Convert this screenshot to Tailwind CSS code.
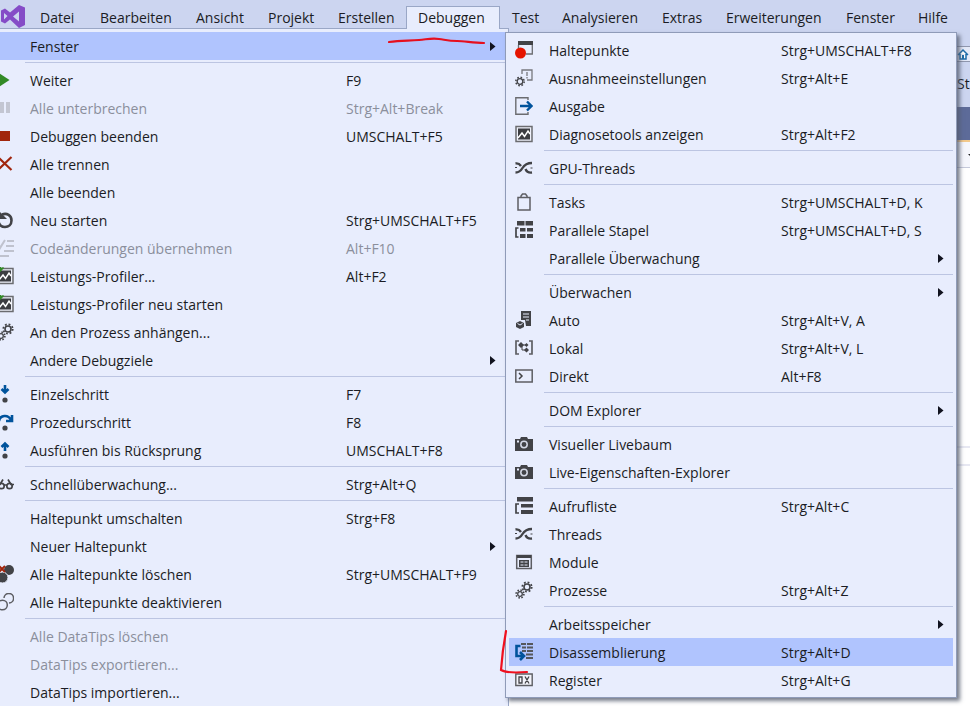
<!DOCTYPE html>
<html lang="de">
<head>
<meta charset="utf-8">
<meta name="viewport" content="width=device-width, initial-scale=1">
<title>Visual Studio – Debuggen</title>
<script src="https://cdn.jsdelivr.net/npm/@tailwindcss/browser@4"></script>
</head>
<body class="relative flex h-screen flex-col overflow-hidden bg-[#ccd5f0] font-['Open_Sans','Noto_Sans',sans-serif] text-sm text-[#1b1c24]">
<svg class="hidden" aria-hidden="true">
  <symbol id="chart" viewBox="0 0 18 18"><path d="M1 1.500h16v15H1z" fill="#eef0fa" stroke="#6b6c70" stroke-width="1.500"/><path d="M3 3.500h12v11H3z" fill="#3c3d41"/><path d="M3 13l4-5 2.500 3.500L13 6l2 3" fill="none" stroke="#fff" stroke-width="1.500"/></symbol>
  <symbol id="gears" viewBox="0 0 18 18"><g fill="none" stroke="#424347"><circle cx="12" cy="6" r="3" stroke-width="1.600"/><circle cx="12" cy="6" r="4.700" stroke-width="1.800" stroke-dasharray="1.850 1.840"/><circle cx="5" cy="13" r="2.300" stroke-width="1.300"/><circle cx="5" cy="13" r="3.900" stroke-width="1.600" stroke-dasharray="1.530 1.530"/></g></symbol>
  <symbol id="threads" viewBox="0 0 18 18"><g fill="none" stroke="#424347" stroke-width="2.400"><path d="M.5 13.500c4 0 5.500-2 7-4.500S12 4 17 4"/><path d="M.5 4.500c2.500-.5 4 .3 5.500 2.500M10.500 10c1 2.500 3 4 6.500 3.500"/><path d="M0 8.500h2M15.500 9h2" stroke-width="1.200"/></g></symbol>
  <symbol id="camera" viewBox="0 0 18 18"><path d="M0 4h5l1-2h6l1 2h5v12H0z" fill="#424347"/><circle cx="9" cy="9.500" r="3.200" fill="none" stroke="#d5d9e6" stroke-width="1.500"/><path d="M2 5.500h2v2H2z" fill="#e8edfd"/></symbol>
  <symbol id="arrow" viewBox="0 0 6 9"><path d="M0 0l5.500 4.500L0 9z" fill="#11131f"/></symbol>
</svg>

<nav aria-label="Hauptmenü" class="flex h-7 shrink-0 items-end whitespace-nowrap [&_button]:h-[22px] [&_button]:shrink-0 [&_button]:pt-0.5 [&_button]:pl-3 [&_button]:text-left">
  <svg class="h-7 w-7 shrink-0" viewBox="0 0 28 28" aria-hidden="true"><path d="M19 5l6 2.500v17.500L19 28l-9-8.500-5 4-4-2v-11L5 8.500l5 4zM19 11.500l-6 5 6 5zM4 13v6.500L7.500 16z" fill="#854cc7" fill-rule="evenodd"/></svg>
  <button class="w-[60px]">Datei</button>
  <button class="w-24">Bearbeiten</button>
  <button class="w-[72px]">Ansicht</button>
  <button class="w-[70px]">Projekt</button>
  <button class="w-20">Erstellen</button>
  <button class="w-[94px] bg-[#e8edfd] inset-ring inset-ring-[#9aa7c6] relative z-10 after:absolute after:inset-x-px after:-bottom-px after:h-0.5 after:bg-[#e8edfd]" aria-expanded="true">Debuggen</button>
  <button class="w-[50px]">Test</button>
  <button class="w-[100px]">Analysieren</button>
  <button class="w-16">Extras</button>
  <button class="w-[120px]">Erweiterungen</button>
  <button class="w-[72px]">Fenster</button>
  <button class="w-16">Hilfe</button>
</nav>

<div class="flex min-h-0 flex-1">
  <div role="menu" aria-label="Debuggen" class="w-[509px] shrink-0 overflow-hidden border-t border-r border-[#9aa7c6] bg-[#e8edfd] pt-[3px] whitespace-nowrap [&_button]:grid [&_button]:h-7 [&_button]:w-full [&_button]:grid-cols-[30px_316px_144px_1fr] [&_button]:items-center [&_button]:text-left [&_hr]:mt-0.5 [&_hr]:mb-[3px] [&_hr]:ml-[25px] [&_hr]:border-[#bcc5e2] [&_span]:pt-0.5 [&_svg]:-ml-1 [&_svg]:size-[18px] [&_svg.arrow]:ml-0 [&_svg.arrow]:h-[9px] [&_svg.arrow]:w-1.5">
    <button role="menuitem" class="bg-[#b0c4fe]"><i></i><span>Fenster</span><span></span><svg class="arrow"><use href="#arrow"/></svg></button>
    <hr>
    <button role="menuitem"><svg viewBox="0 0 18 18"><path d="M2 1.500L13.500 9 2 16.500z" fill="#328a26"/></svg><span>Weiter</span><span>F9</span></button>
    <button role="menuitem" disabled class="text-[#8b8f9c]"><svg viewBox="0 0 18 18"><path d="M3 3h5v11H3zM10 3h4v11h-4z" fill="#c3c6d2"/></svg><span>Alle unterbrechen</span><span>Strg+Alt+Break</span></button>
    <button role="menuitem"><svg viewBox="0 0 18 18"><path d="M2 4h12v10H2z" fill="#a1260d"/></svg><span>Debuggen beenden</span><span>UMSCHALT+F5</span></button>
    <button role="menuitem"><svg viewBox="0 0 18 18"><path d="M2 2l13.500 13M15.500 2L2 15" stroke="#a1260d" stroke-width="2.200"/></svg><span>Alle trennen</span><span></span></button>
    <button role="menuitem"><i></i><span>Alle beenden</span><span></span></button>
    <button role="menuitem"><svg viewBox="0 0 18 18"><path d="M6 3.500c5-2 9.500 1 9.500 6 0 4-3 6.500-6.500 6.500-3 0-5-1.500-6-4" fill="none" stroke="#424347" stroke-width="2.600"/><path d="M3 0v8h8z" fill="#424347"/></svg><span>Neu starten</span><span>Strg+UMSCHALT+F5</span></button>
    <button role="menuitem" disabled class="text-[#8b8f9c]"><svg viewBox="0 0 18 18"><path d="M2 4l2 5 5-8M11 2h7M10 7h8M8 12h10M1 17h12" fill="none" stroke="#bfc2ce" stroke-width="2"/></svg><span>Codeänderungen übernehmen</span><span>Alt+F10</span></button>
    <button role="menuitem"><svg viewBox="0 0 18 18"><use href="#chart"/><path d="M1 3.500l3.500-3v3l3-3" stroke="#328a26" stroke-width="1.600" fill="none"/></svg><span>Leistungs-Profiler...</span><span>Alt+F2</span></button>
    <button role="menuitem"><svg viewBox="0 0 18 18"><use href="#chart"/><path d="M1 3.500l3.500-3v3l3-3" stroke="#328a26" stroke-width="1.600" fill="none"/></svg><span>Leistungs-Profiler neu starten</span><span></span></button>
    <button role="menuitem"><svg><use href="#gears"/></svg><span>An den Prozess anhängen...</span><span></span></button>
    <button role="menuitem"><i></i><span>Andere Debugziele</span><span></span><svg class="arrow"><use href="#arrow"/></svg></button>
    <hr>
    <button role="menuitem"><svg viewBox="0 0 18 18"><path d="M9 0v8M5.500 4L9 7.500 12.500 4" fill="none" stroke="#00539c" stroke-width="2.600"/><circle cx="9" cy="15" r="2.600" fill="#424347"/></svg><span>Einzelschritt</span><span>F7</span></button>
    <button role="menuitem"><svg viewBox="0 0 18 18"><path d="M3 8c1-6 9-7 12-1M16 2v6h-6" fill="none" stroke="#00539c" stroke-width="2.600"/><circle cx="9" cy="15" r="2.600" fill="#424347"/></svg><span>Prozedurschritt</span><span>F8</span></button>
    <button role="menuitem"><svg viewBox="0 0 18 18"><path d="M9 10V2M5.500 6L9 2.500 12.500 6" fill="none" stroke="#00539c" stroke-width="2.600"/><circle cx="9" cy="15" r="2.600" fill="#424347"/></svg><span>Ausführen bis Rücksprung</span><span>UMSCHALT+F8</span></button>
    <hr>
    <button role="menuitem"><svg viewBox="0 0 18 18"><g fill="none" stroke="#424347" stroke-width="1.700"><circle cx="5.500" cy="11" r="2.700"/><circle cx="13.500" cy="11" r="2.700"/><path d="M1 9.500h3l3-5M18 9.500h-3l-3-5M8 10h3"/></g></svg><span>Schnellüberwachung...</span><span>Strg+Alt+Q</span></button>
    <hr>
    <button role="menuitem"><i></i><span>Haltepunkt umschalten</span><span>Strg+F8</span></button>
    <button role="menuitem"><i></i><span>Neuer Haltepunkt</span><span></span><svg class="arrow"><use href="#arrow"/></svg></button>
    <button role="menuitem"><svg viewBox="0 0 18 18"><circle cx="13" cy="5" r="5" fill="#424347"/><circle cx="6.500" cy="12.500" r="5.500" fill="#424347" stroke="#e8edfd"/><path d="M3 1l6 6M9 1L3 7" stroke="#a1260d" stroke-width="2"/></svg><span>Alle Haltepunkte löschen</span><span>Strg+UMSCHALT+F9</span></button>
    <button role="menuitem"><svg viewBox="0 0 18 18"><g fill="none" stroke="#5d5e63" stroke-width="1.500"><path d="M8 5a4.800 4.800 0 1 1 5 5"/><circle cx="6.500" cy="12" r="4.800"/></g></svg><span>Alle Haltepunkte deaktivieren</span><span></span></button>
    <hr>
    <button role="menuitem" disabled class="text-[#8b8f9c]"><i></i><span>Alle DataTips löschen</span><span></span></button>
    <button role="menuitem" disabled class="text-[#8b8f9c]"><i></i><span>DataTips exportieren...</span><span></span></button>
    <button role="menuitem"><i></i><span>DataTips importieren...</span><span></span></button>
  </div>

  <div class="flex min-w-0 flex-1 flex-col bg-white">
    <div class="flex h-[79px] shrink-0 flex-col items-end gap-3 bg-[#ccd5f0] pt-[18px]">
      <div class="flex h-4 w-3.5 items-center border-y border-[#8f96ad] bg-[#e4e9f8]"><svg class="size-3.5" viewBox="0 0 14 14" aria-hidden="true"><path d="M2 8l5-5 5 5M4 7v5h6V7" fill="#fff" stroke="#1c6ba8" stroke-width="1.500"/><path d="M6 8h2v4H6z" fill="#1c6ba8"/></svg></div>
      <span class="w-[13px] overflow-hidden">St</span>
    </div>
    <div class="h-[33px] shrink-0 bg-[#5d6b99]"></div>
    <div class="flex h-7 shrink-0 items-center justify-end border-t-2 border-b border-t-[#f3c98b] border-b-[#c5c9da] bg-[#f5f6fc]"><svg class="h-0.5 w-0.5" viewBox="0 0 2 2" aria-hidden="true"><path d="M0 0h2v2z" fill="#222"/></svg></div>
    <div class="mt-[278px] h-5 shrink-0 border-y-2 border-[#e7e8f2]"></div>
  </div>
</div>

<div role="menu" aria-label="Fenster" class="absolute top-8 left-[505px] z-20 w-[452px] border border-[#8f9bb8] bg-[#e8edfd] p-[3px] whitespace-nowrap shadow-[3px_3px_4px_#555d6ecc] [&_button]:grid [&_button]:h-7 [&_button]:w-full [&_button]:grid-cols-[40px_232px_157px_1fr] [&_button]:items-center [&_button]:text-left [&_hr]:mt-0.5 [&_hr]:mb-[3px] [&_hr]:ml-[35px] [&_hr]:border-[#bcc5e2] [&_span]:pt-0.5 [&_svg]:ml-1.5 [&_svg]:size-[18px] [&_svg.arrow]:ml-0 [&_svg.arrow]:h-[9px] [&_svg.arrow]:w-1.5">
  <button role="menuitem"><svg viewBox="0 0 18 18"><path d="M3 0h15v4H3z" fill="#424347"/><path d="M3.500 4v4M17.300 4v9H11" fill="none" stroke="#6b6c70" stroke-width="1.300"/><circle cx="5.500" cy="12" r="5.500" fill="#e51400"/></svg><span>Haltepunkte</span><span>Strg+UMSCHALT+F8</span></button>
  <button role="menuitem"><svg viewBox="0 0 18 18"><path d="M7 5V1h10v10h-5M12 3v4M12 8v1.500" fill="none" stroke="#77787e" stroke-width="1.300"/><circle cx="5" cy="12.500" r="2.800" fill="none" stroke="#424347" stroke-width="1.300"/><circle cx="5" cy="12.500" r="4.200" fill="none" stroke="#424347" stroke-width="1.500" stroke-dasharray="1.650 1.650"/></svg><span>Ausnahmeeinstellungen</span><span>Strg+Alt+E</span></button>
  <button role="menuitem"><svg viewBox="0 0 18 18"><path d="M13 3V.8H.8v16.400H13V15" fill="none" stroke="#6b6c70" stroke-width="1.400"/><path d="M5 9h11M12 4.500L16.500 9 12 13.500" fill="none" stroke="#00539c" stroke-width="2.400"/></svg><span>Ausgabe</span><span></span></button>
  <button role="menuitem"><svg><use href="#chart"/></svg><span>Diagnosetools anzeigen</span><span>Strg+Alt+F2</span></button>
  <hr>
  <button role="menuitem"><svg><use href="#threads"/></svg><span>GPU-Threads</span><span></span></button>
  <hr>
  <button role="menuitem"><svg viewBox="0 0 18 18"><path d="M3 4.500h12v12.500H3zM6 4.500V3l1.500-2h3L12 3v1.500" fill="none" stroke="#5d5e63" stroke-width="1.500"/></svg><span>Tasks</span><span>Strg+UMSCHALT+D, K</span></button>
  <button role="menuitem"><svg viewBox="0 0 18 18"><path d="M2 0h7.500v4.500H2zM10.500 0H18v4.500h-7.500zM5 7h5.500v3.500H5zM12 7h6v3.500h-6zM5 13h5.500v4H5zM12 13h6v4h-6z" fill="#424347"/><path d="M3.500 7H1v9h2.500" fill="none" stroke="#424347" stroke-width="1.700"/></svg><span>Parallele Stapel</span><span>Strg+UMSCHALT+D, S</span></button>
  <button role="menuitem"><i></i><span>Parallele Überwachung</span><span></span><svg class="arrow"><use href="#arrow"/></svg></button>
  <hr>
  <button role="menuitem"><i></i><span>Überwachen</span><span></span><svg class="arrow"><use href="#arrow"/></svg></button>
  <button role="menuitem"><svg viewBox="0 0 18 18"><path d="M6 0h10v15h-5l-1-6H6z" fill="#424347"/><path d="M8 3h6M8 6h6M11 9h3" stroke="#e8edfd" stroke-width="1.200"/><path d="M1 12l4-2 4 2v4l-4 2-4-2z" fill="#424347"/><path d="M2.500 12.500L5 14l2.500-1.500" fill="none" stroke="#e8edfd"/></svg><span>Auto</span><span>Strg+Alt+V, A</span></button>
  <button role="menuitem"><svg viewBox="0 0 18 18"><path d="M4 2H1v13h3M14 2h3v13h-3" fill="none" stroke="#5d5e63" stroke-width="1.700"/><path d="M3 6l3-3 3 3-3 3zM9.500 6l2-2 2 2-2 2zM9 11l2.500-2.500L14 11l-2.500 2.500z" fill="#424347"/><path d="M8 6h3M7 7v4h4" fill="none" stroke="#424347"/></svg><span>Lokal</span><span>Strg+Alt+V, L</span></button>
  <button role="menuitem"><svg viewBox="0 0 18 18"><path d="M.8 3h16.400v12H.8z" fill="none" stroke="#5d5e63" stroke-width="1.500"/><path d="M4 6l3 3-3 3" fill="none" stroke="#424347" stroke-width="1.500"/></svg><span>Direkt</span><span>Alt+F8</span></button>
  <hr>
  <button role="menuitem"><i></i><span>DOM Explorer</span><span></span><svg class="arrow"><use href="#arrow"/></svg></button>
  <hr>
  <button role="menuitem"><svg><use href="#camera"/></svg><span>Visueller Livebaum</span><span></span></button>
  <button role="menuitem"><svg><use href="#camera"/></svg><span>Live-Eigenschaften-Explorer</span><span></span></button>
  <hr>
  <button role="menuitem"><svg viewBox="0 0 18 18"><path d="M2 0h16v4.500H2zM6 7h12v3.500H6zM6 13h12v4H6z" fill="#424347"/><path d="M4 7H1v9h3" fill="none" stroke="#424347" stroke-width="1.700"/></svg><span>Aufrufliste</span><span>Strg+Alt+C</span></button>
  <button role="menuitem"><svg><use href="#threads"/></svg><span>Threads</span><span></span></button>
  <button role="menuitem"><svg viewBox="0 0 18 18"><path d="M1.700 2.500h14.600v13H1.700z" fill="none" stroke="#5d5e63" stroke-width="1.500"/><path d="M2 2h14v3H2zM4 7h10v7H4z" fill="#424347"/><path d="M5.500 9h3M9.500 9h3M5.500 12h3M9.500 12h3" stroke="#e8edfd"/></svg><span>Module</span><span></span></button>
  <button role="menuitem"><svg><use href="#gears"/></svg><span>Prozesse</span><span>Strg+Alt+Z</span></button>
  <hr>
  <button role="menuitem"><i></i><span>Arbeitsspeicher</span><span></span><svg class="arrow"><use href="#arrow"/></svg></button>
  <button role="menuitem" class="bg-[#b0c4fe]"><svg viewBox="0 0 18 18"><path d="M6 1h5M7 4.500h4M7 8h4M12 11.500h-1M12 15h-1M12 1h6M12 4.500h6M12 8h6M12 11.500h6M11 15h7" stroke="#55575d" stroke-width="1.800"/><path d="M5.500 3H1.500v10H8M5 9l4 4-4 4" fill="none" stroke="#00539c" stroke-width="2.600"/></svg><span>Disassemblierung</span><span>Strg+Alt+D</span></button>
  <button role="menuitem"><svg viewBox="0 0 18 18"><path d="M.8 3h16.400v11.500H.8z" fill="#f3f4fb" stroke="#5d5e63" stroke-width="1.400"/><path d="M4 6h3v6H4zM10 5.500l4 7M14 5.500l-4 7" fill="none" stroke="#424347" stroke-width="1.300"/></svg><span>Register</span><span>Strg+Alt+G</span></button>
</div>

<svg class="pointer-events-none absolute top-9 left-[386px] z-30 h-3 w-[100px]" viewBox="0 0 100 12" fill="none" aria-hidden="true"><path d="M3 6c12-2 20-1 30-2s13-2 20-1 10 2 18 2 16 2 27 2" stroke="#e60f1e" stroke-width="2.200" stroke-linecap="round"/></svg>
<svg class="pointer-events-none absolute top-[628px] left-[498px] z-30 h-12 w-8" viewBox="0 0 32 48" fill="none" aria-hidden="true"><path d="M8 3C6 14 4 28 3 42c5 3 13 3 26 2" stroke="#f0101e" stroke-width="2.200" stroke-linecap="round"/></svg>
</body>
</html>
